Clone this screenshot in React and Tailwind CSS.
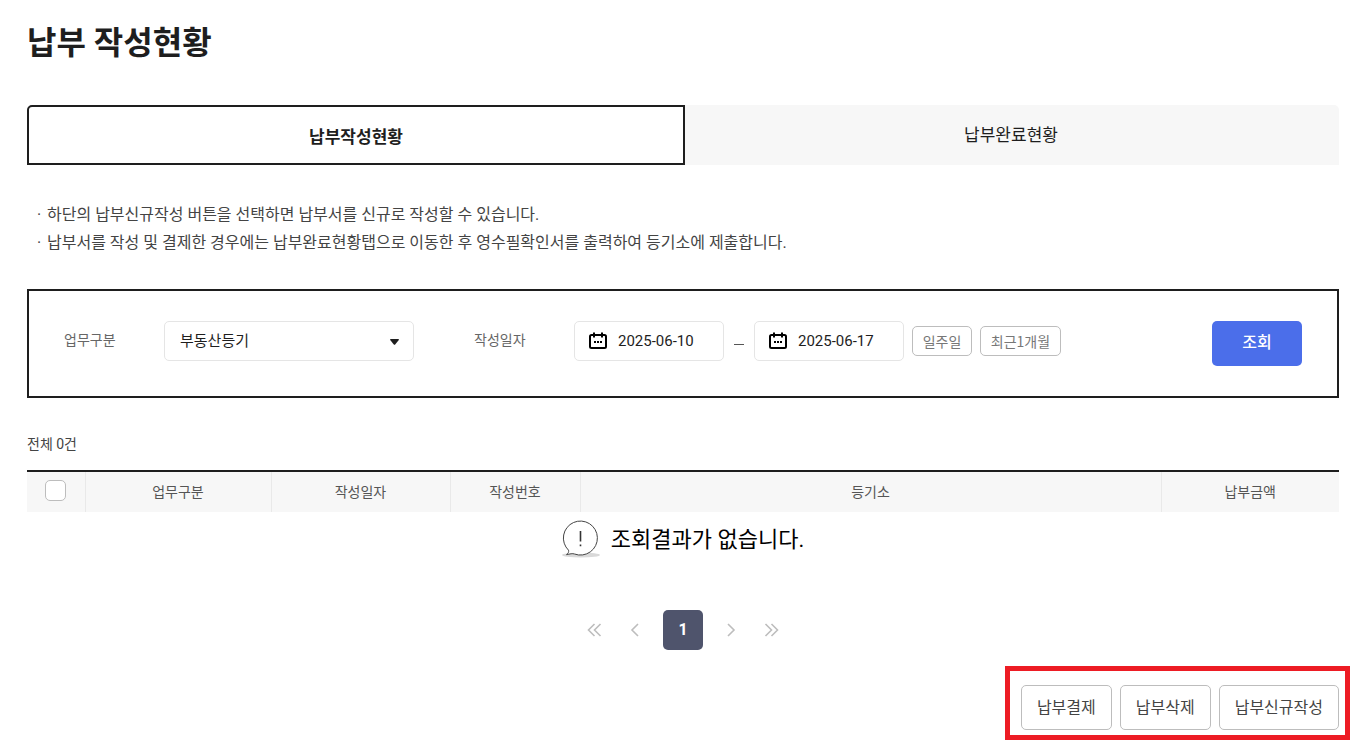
import React, { useState } from "react";

const tabs = ["납부작성현황", "납부완료현황"];

const notices = [
  "하단의 납부신규작성 버튼을 선택하면 납부서를 신규로 작성할 수 있습니다.",
  "납부서를 작성 및 결제한 경우에는 납부완료현황탭으로 이동한 후 영수필확인서를 출력하여 등기소에 제출합니다.",
];

const columns = ["업무구분", "작성일자", "작성번호", "등기소", "납부금액"];

const actions = ["납부결제", "납부삭제", "납부신규작성"];

function CalendarIcon() {
  return (
    <svg className="shrink-0" width="18" height="18" viewBox="0 0 18 18" aria-hidden="true">
      <rect x="1" y="3" width="16" height="13" rx="1.5" fill="none" stroke="#000" strokeWidth="2" />
      <path d="M4 .5h2v5H4zM12 .5h2v5h-2z" />
      <path d="M5 9h2v2H5zM8 9h2v2H8zM11 9h2v2h-2z" />
    </svg>
  );
}

function DateField({ id, label, value, onChange }) {
  return (
    <div className="flex items-center w-[150px] h-10 pl-[14px] border border-[#e5e5e5] rounded-[5px]">
      <CalendarIcon />
      <input
        className="w-full h-full min-w-0 ml-[11px] text-[15px] text-[#1e1e1e] outline-none"
        type="text"
        id={id}
        aria-label={label}
        value={value}
        onChange={onChange}
      />
    </div>
  );
}

function NoResultIcon() {
  return (
    <svg width="38" height="38" viewBox="0 0 38 38" aria-hidden="true">
      <ellipse cx="19" cy="35" rx="19" ry="2.5" fill="#d9d9d9" />
      <path
        d="M6.5 30.2A17 17 0 1 1 12.5 34C10.5 33.2 8 34 4.5 34.6C6.3 33.2 7 32 6.5 30.2Z"
        fill="#fff"
        stroke="#444"
        strokeWidth="1"
      />
      <path d="M18.5 11v10.5M18.5 24.5v1.8" stroke="#333" strokeWidth="1.6" />
    </svg>
  );
}

function PageArrow({ label, points }) {
  return (
    <button type="button" aria-label={label} className="flex items-center justify-center size-10">
      <svg width="16" height="14" viewBox="0 0 16 14" fill="none" stroke="#bdbdbd" strokeWidth="1.6">
        {points.map((p) => (
          <polyline key={p} points={p} />
        ))}
      </svg>
    </button>
  );
}

export default function App() {
  const [tab, setTab] = useState(0);
  const [checked, setChecked] = useState(false);
  const [formData, setFormData] = useState({
    jobType: "부동산등기",
    startDate: "2025-06-10",
    endDate: "2025-06-17",
  });

  function onChange(e) {
    setFormData({ ...formData, [e.target.id]: e.target.value });
  }

  return (
    <main className="px-[27px] pt-[19px] pb-3 bg-white text-[#1e1e1e] font-[Roboto,'Noto_Sans_CJK_KR',sans-serif]">
      <h1 className="text-[32px] leading-[48px] font-bold">납부 작성현황</h1>

      <div className="grid grid-cols-2 mt-[38px]" role="tablist">
        {tabs.map((name, i) => (
          <button
            key={name}
            type="button"
            role="tab"
            aria-selected={tab === i}
            onClick={() => setTab(i)}
            className={
              tab === i
                ? "relative h-[60px] -mr-0.5 pt-1.5 border-2 border-[#1e1e1e] bg-white rounded-tl-[5px] text-[17px] font-bold"
                : "h-[60px] pt-0.5 bg-[#f7f7f7] rounded-tr-[5px] text-[17px]"
            }
          >
            {name}
          </button>
        ))}
      </div>

      <ul className="mt-9 text-base leading-7 text-[#444]">
        {notices.map((text) => (
          <li key={text} className="flex">
            <span className="w-5 pl-[10px]">·</span>
            <span className="flex-1">{text}</span>
          </li>
        ))}
      </ul>

      <form
        className="flex mt-8 px-[35px] py-[30px] border-2 border-[#1e1e1e]"
        onSubmit={(e) => e.preventDefault()}
      >
        <label htmlFor="jobType" className="w-[100px] text-sm leading-[38px] text-[#666]">
          업무구분
        </label>
        <div className="relative w-[250px] h-10">
          <select
            id="jobType"
            value={formData.jobType}
            onChange={onChange}
            className="w-full h-full px-[15px] appearance-none bg-white border border-[#e5e5e5] rounded-[5px] text-[15px] text-[#1e1e1e]"
          >
            <option>부동산등기</option>
            <option>법인등기</option>
          </select>
          <svg
            className="absolute right-[15px] top-[18px] pointer-events-none"
            width="9"
            height="6"
            viewBox="0 0 9 6"
            fill="#1e1e1e"
          >
            <path d="M.8 0h7.4q1 0 .6 1L5.4 5.3q-.9 1-1.8 0L.2 1Q-.2 0 .8 0z" />
          </svg>
        </div>
        <label htmlFor="startDate" className="w-[100px] ml-[60px] text-sm leading-[38px] text-[#666]">
          작성일자
        </label>
        <DateField id="startDate" label="작성일자 시작일" value={formData.startDate} onChange={onChange} />
        <span className="w-[10px] h-px mx-[10px] mt-[23px] bg-[#555]" />
        <DateField id="endDate" label="작성일자 종료일" value={formData.endDate} onChange={onChange} />
        <div className="flex gap-2 ml-2 mt-[5px] font-['Noto_Sans_CJK_KR',sans-serif]">
          <button
            type="button"
            className="h-[30px] w-[60px] border border-[#bdbdbd] rounded-[5px] text-sm text-[#777]"
          >
            일주일
          </button>
          <button
            type="button"
            className="h-[30px] w-[81px] border border-[#bdbdbd] rounded-[5px] text-sm text-[#777]"
          >
            최근1개월
          </button>
        </div>
        <button
          type="submit"
          className="w-[90px] h-[45px] ml-auto pb-0.5 rounded-[5px] bg-[#4b6eea] text-base font-medium text-white"
        >
          조회
        </button>
      </form>

      <p className="mt-9 text-sm leading-5 text-[#444]">전체 0건</p>

      <table className="w-full mt-4 table-fixed border-t-2 border-[#1e1e1e]">
        <colgroup>
          <col className="w-[58px]" />
          <col className="w-[186px]" />
          <col className="w-[179px]" />
          <col className="w-[130px]" />
          <col />
          <col className="w-[178px]" />
        </colgroup>
        <thead>
          <tr className="h-[41px] bg-[#f7f7f7]">
            <th className="border-r border-[#e9e9e9] p-0 pb-1 align-middle">
              <input
                type="checkbox"
                aria-label="전체 선택"
                checked={checked}
                onChange={() => setChecked((prevState) => !prevState)}
                className="block mx-auto size-[21px] appearance-none bg-white border border-[#bdbdbd] rounded-[5px] checked:bg-[#4b6eea]"
              />
            </th>
            {columns.map((name) => (
              <th
                key={name}
                className="p-0 border-r border-[#e9e9e9] last:border-r-0 text-sm font-normal text-[#555]"
              >
                {name}
              </th>
            ))}
          </tr>
        </thead>
      </table>

      <div className="flex items-start justify-center gap-[11px] mt-2">
        <NoResultIcon />
        <p className="text-[22px] leading-10 text-black">조회결과가 없습니다.</p>
      </div>

      <nav className="flex items-center justify-center mt-[50px]">
        <PageArrow label="처음" points={["7.5,1 1.5,7 7.5,13", "13.5,1 7.5,7 13.5,13"]} />
        <PageArrow label="이전" points={["11,1 5,7 11,13"]} />
        <button
          type="button"
          aria-current="page"
          className="size-10 mx-2 rounded-[5px] bg-[#4f546c] text-base font-bold text-white"
        >
          1
        </button>
        <PageArrow label="다음" points={["5,1 11,7 5,13"]} />
        <PageArrow label="마지막" points={["2.5,1 8.5,7 2.5,13", "8.5,1 14.5,7 8.5,13"]} />
      </nav>

      <div className="flex justify-end gap-2 w-fit ml-auto -mr-[11px] mt-4 pt-[14px] pr-[6px] pb-[5px] pl-[11px] border-5 border-[#ed1c24]">
        {actions.map((name) => (
          <button
            key={name}
            type="button"
            className="h-[45px] px-[15px] border border-[#bdbdbd] rounded-[5px] text-base text-[#444]"
          >
            {name}
          </button>
        ))}
      </div>
    </main>
  );
}
